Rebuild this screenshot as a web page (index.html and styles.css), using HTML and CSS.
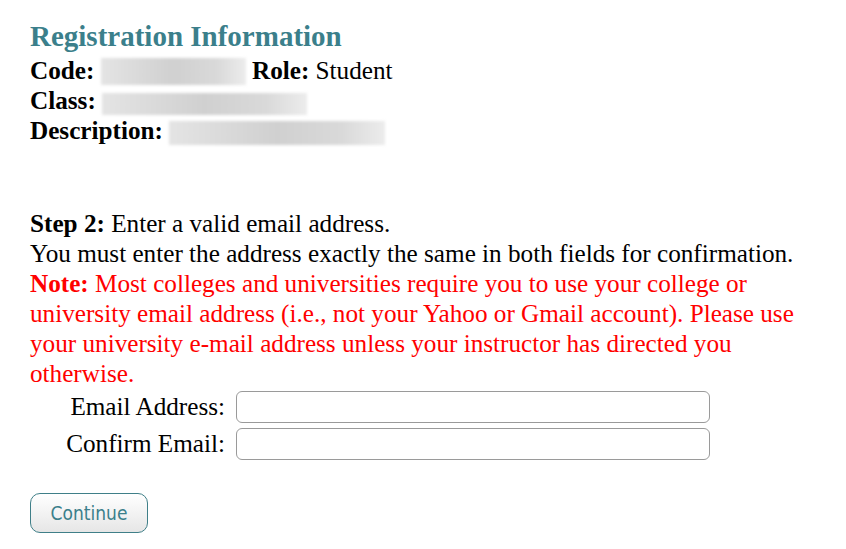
FILE: index.html
```html
<!DOCTYPE html>
<html>
<head>
<meta charset="utf-8">
<link rel="stylesheet" href="styles.css">
</head>
<body>
<div class="page">
  <h1 class="title">Registration Information</h1>
  <div class="info">
    <div class="row"><b>Code:</b> <span class="blur blur-code"></span> <b>Role:</b> Student</div>
    <div class="row"><b>Class:</b> <span class="blur blur-class"></span></div>
    <div class="row"><b>Description:</b> <span class="blur blur-desc"></span></div>
  </div>
  <div class="step">
    <div><b>Step 2:</b> Enter a valid email address.</div>
    <div>You must enter the address exactly the same in both fields for confirmation.</div>
    <div class="note"><b>Note:</b> Most colleges and universities require you to use your college or university email address (i.e., not your Yahoo or Gmail account). Please use your university e-mail address unless your instructor has directed you otherwise.</div>
  </div>
  <div class="form">
    <label class="lbl" for="e1">Email Address:</label>
    <input class="field" id="e1" type="text">
    <label class="lbl" for="e2">Confirm Email:</label>
    <input class="field" id="e2" type="text">
  </div>
  <button class="btn" type="button">Continue</button>
</div>
</body>
</html>
```
FILE: styles.css
```css
html, body {
  margin: 0;
  padding: 0;
  background: #ffffff;
}
.page {
  width: 782px;
  padding: 16px 30px 0 30px;
  font-family: "Liberation Serif", "Times New Roman", serif;
  font-size: 25.2px;
  line-height: 30px;
  color: #000;
}
.title {
  margin: 0;
  font-size: 29px;
  line-height: 40px;
  font-weight: bold;
  color: #3b7f8b;
}
.info .row {
  height: 30px;
}
.blur {
  display: inline-block;
  vertical-align: -6px;
  background: linear-gradient(90deg, #e4e4e4, #d0d0d0 50%, #d9d9d9 80%, #ececec);
  filter: blur(1.5px);
}
.blur-code { width: 145px; height: 27px; }
.blur-class { width: 205px; height: 22px; }
.blur-desc { width: 216px; height: 24px; }
.step {
  margin-top: 63px;
}
.note {
  color: #ff0000;
}
.form {
  display: grid;
  grid-template-columns: 195px 474px;
  column-gap: 11px;
  row-gap: 5px;
  margin-top: 2px;
  align-items: center;
}
.lbl {
  text-align: right;
}
.field {
  box-sizing: border-box;
  height: 32px;
  border: 1px solid #9a9a9a;
  border-radius: 6px;
  padding: 0 6px;
  background: #fff;
  font-size: 16px;
}
.btn {
  box-sizing: border-box;
  margin-top: 33px;
  width: 118px;
  height: 40px;
  border: 1px solid #3f7f88;
  border-radius: 10px;
  background: linear-gradient(#ffffff, #e6e6e6);
  color: #3b7f8b;
  font-family: "DejaVu Sans Condensed", "DejaVu Sans", Verdana, sans-serif;
  font-size: 19px;
  padding: 0;
}
```
